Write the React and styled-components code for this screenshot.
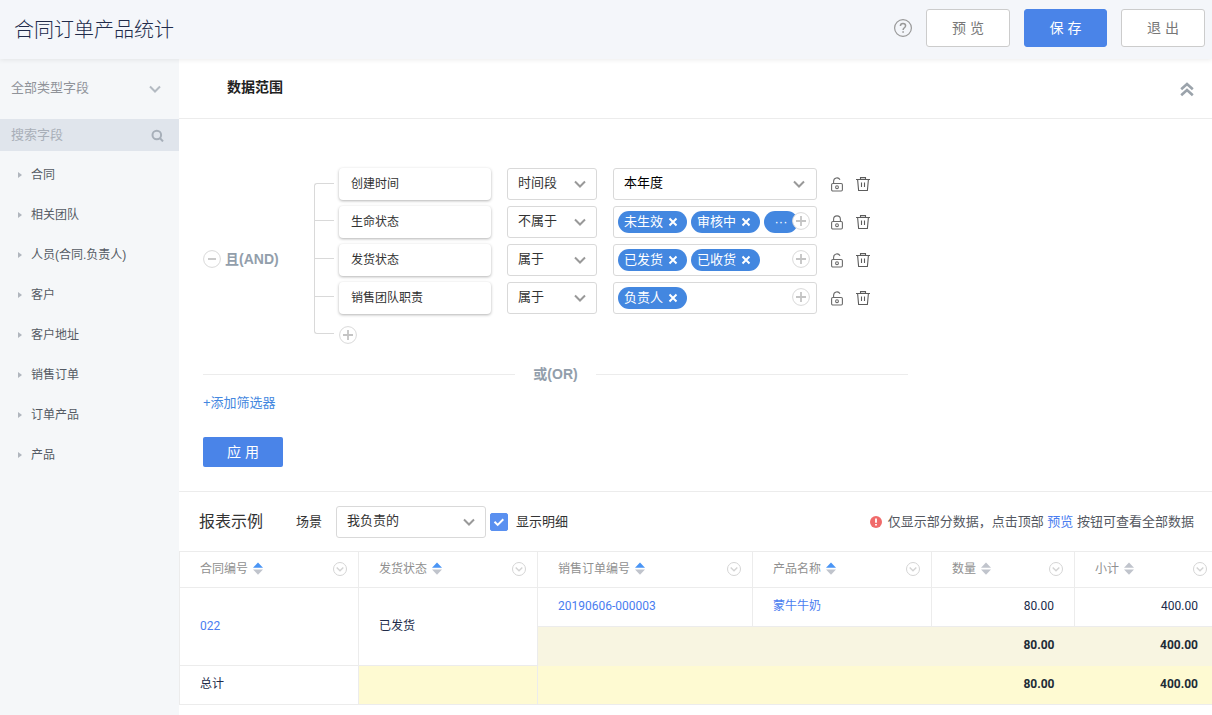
import { useState } from "react";
import styled, { createGlobalStyle, css } from "styled-components";

const fields = [
  "合同",
  "相关团队",
  "人员(合同.负责人)",
  "客户",
  "客户地址",
  "销售订单",
  "订单产品",
  "产品",
];

const filters = [
  { id: 1, name: "创建时间", operator: "时间段", range: "本年度", locked: false },
  { id: 2, name: "生命状态", operator: "不属于", tags: ["未生效", "审核中"], more: true, locked: true },
  { id: 3, name: "发货状态", operator: "属于", tags: ["已发货", "已收货"], locked: false },
  { id: 4, name: "销售团队职责", operator: "属于", tags: ["负责人"], locked: false },
];

const columns = [
  { id: 1, title: "合同编号", width: "179px", sorted: true },
  { id: 2, title: "发货状态", width: "179px", sorted: true },
  { id: 3, title: "销售订单编号", width: "215px", sorted: true },
  { id: 4, title: "产品名称", width: "179px", sorted: true },
  { id: 5, title: "数量", width: "143px", sorted: false },
  { id: 6, title: "小计", width: "auto", sorted: false },
];

// Icons
const ChevronIcon = ({ color = "#999" }) => (
  <svg width="14" height="14" viewBox="0 0 14 14" fill="none" stroke={color} strokeWidth="2" aria-hidden="true">
    <path d="M2 4.5 7 9.5 12 4.5" />
  </svg>
);

const DoubleUpIcon = () => (
  <svg width="14" height="16" viewBox="0 0 14 16" fill="none" stroke="#9ba3ab" strokeWidth="2.6" aria-hidden="true">
    <path d="M1.2 8.2 7 3 12.8 8.2M1.2 14.2 7 9 12.8 14.2" />
  </svg>
);

const SearchIcon = () => (
  <svg width="13" height="13" viewBox="0 0 13 13" fill="none" stroke="#a7afb9" strokeWidth="2" aria-hidden="true">
    <circle cx="5.8" cy="6" r="4.3" />
    <path d="M9 9.2 12 12.4" />
  </svg>
);

const HelpIcon = () => (
  <svg width="18" height="18" viewBox="1 1 18 18" fill="none" stroke="#999" strokeWidth="1.2" aria-hidden="true">
    <circle cx="10" cy="10" r="8.4" />
    <path d="M7.4 8c0-1.6 1.1-2.6 2.6-2.6s2.6 1 2.6 2.4c0 1.9-2.5 2-2.5 4.1" strokeWidth="1.5" />
    <path d="M10.1 13.2v1.6" strokeWidth="1.6" />
  </svg>
);

const CircleIcon = ({ plus }) => (
  <svg width="18" height="18" viewBox="0 0 18 18" fill="#fff" stroke="#d9d9d9" aria-hidden="true">
    <circle cx="9" cy="9" r="8.4" />
    <path d={plus ? "M4 9h10M9 4v10" : "M5 9h8"} stroke="#c4c4c4" strokeWidth="1.8" />
  </svg>
);

const LockIcon = ({ locked }) => (
  <svg width="12" height="15" viewBox="0 0 12 15" fill="none" stroke="#6b6b6b" strokeWidth="1.1" aria-hidden="true">
    <rect x=".6" y="6.5" width="10.8" height="7.5" rx="1.2" />
    <path d={locked ? "M2.6 6.500V4.300a3.4 3.4 0 0 1 6.8 0v2.200" : "M2.6 6.500V4.300A3.4 3.4 0 0 1 9 2.700"} />
    <circle cx="6" cy="10.2" r="1.4" />
  </svg>
);

const TrashIcon = () => (
  <svg width="14" height="15" viewBox="0 0 14 15" fill="none" stroke="#5c5c5c" strokeWidth="1.1" aria-hidden="true">
    <path d="M0 2.500h14M4.500 2.500V.6h5v1.900M1.600 2.500l1 11h8.800l1-11M5.500 5.500V10M8.500 5.500V10" />
  </svg>
);

const CloseIcon = () => (
  <svg width="10" height="10" viewBox="0 0 10 10" fill="none" stroke="#fff" strokeWidth="2" aria-hidden="true">
    <path d="M1.5 1.5l7 7M8.5 1.5l-7 7" />
  </svg>
);

const SortIcon = ({ active }) => (
  <svg width="10" height="13" viewBox="0 0 10 13" aria-hidden="true">
    <path d="M5 .5 10 5.8H0z" fill={active ? "#4a95f5" : "#c0c4cc"} />
    <path d="M5 12.7 10 7.5H0z" fill="#c0c4cc" />
  </svg>
);

const MenuIcon = () => (
  <svg width="14" height="14" viewBox="0 0 14 14" fill="none" stroke="#d4d4d4" aria-hidden="true">
    <circle cx="7" cy="7" r="6.5" />
    <path d="M3.7 5.5 7 8.8 10.3 5.5" strokeWidth="1.4" />
  </svg>
);

const WarningIcon = () => (
  <svg width="12" height="12" viewBox="0 0 12 12" aria-hidden="true">
    <circle cx="6" cy="6" r="6" fill="#f06a6a" />
    <path d="M6 2.5v4.2M6 7.9v1.7" stroke="#fff" strokeWidth="1.8" />
  </svg>
);

const App = () => {
  const [detail, setDetail] = useState(true);

  return (
    <>
      <GlobalStyle />
      <Header>
        <PageTitle>合同订单产品统计</PageTitle>
        <IconButton aria-label="帮助"><HelpIcon /></IconButton>
        <HeaderButton>预 览</HeaderButton>
        <HeaderButton $primary>保 存</HeaderButton>
        <HeaderButton>退 出</HeaderButton>
      </Header>

      <Layout>
        <Sidebar>
          <TypeField>
            <TypeSelect aria-label="字段类型">
              <option>全部类型字段</option>
            </TypeSelect>
            <SelectArrow $right="17px"><ChevronIcon color="#b3bac2" /></SelectArrow>
          </TypeField>
          <SearchBar>
            <SearchInput placeholder="搜索字段" aria-label="搜索字段" />
            <SearchIcon />
          </SearchBar>
          <FieldList>
            {fields.map((field) => (
              <li key={field}>
                <FieldButton><Caret />{field}</FieldButton>
              </li>
            ))}
          </FieldList>
        </Sidebar>

        <Main>
          <ScopeHeader>
            <ScopeTitle>数据范围</ScopeTitle>
            <IconButton aria-label="收起"><DoubleUpIcon /></IconButton>
          </ScopeHeader>

          <Scope>
            <Group>
              <GroupLabel>
                <IconButton aria-label="删除条件组"><CircleIcon /></IconButton>
                <Logic>且(AND)</Logic>
              </GroupLabel>
              <Rules>
                {filters.map((filter) => (
                  <Rule key={filter.id}>
                    <Branch />
                    <RuleName>{filter.name}</RuleName>
                    <SelectBox $width="90px">
                      <Select aria-label={filter.name + "条件"}>
                        <option>{filter.operator}</option>
                      </Select>
                      <SelectArrow $right="10px"><ChevronIcon /></SelectArrow>
                    </SelectBox>
                    <RuleValue>
                      {filter.range ? (
                        <SelectBox $width="204px">
                          <Select aria-label={filter.name} $dark>
                            <option>{filter.range}</option>
                          </Select>
                          <SelectArrow $right="11px"><ChevronIcon /></SelectArrow>
                        </SelectBox>
                      ) : (
                        <TagBox>
                          {filter.tags.map((tag) => (
                            <Tag key={tag}>
                              {tag}
                              <IconButton aria-label={"移除" + tag}><CloseIcon /></IconButton>
                            </Tag>
                          ))}
                          {filter.more && <MoreTag>···</MoreTag>}
                          <AddTag aria-label="添加"><CircleIcon plus /></AddTag>
                        </TagBox>
                      )}
                    </RuleValue>
                    <RuleActions>
                      <IconButton aria-label="锁定"><LockIcon locked={filter.locked} /></IconButton>
                      <IconButton aria-label="删除"><TrashIcon /></IconButton>
                    </RuleActions>
                  </Rule>
                ))}
                <AddRule>
                  <Branch />
                  <IconButton aria-label="添加条件"><CircleIcon plus /></IconButton>
                </AddRule>
              </Rules>
            </Group>

            <Divider><Logic>或(OR)</Logic></Divider>
            <AddFilter href="#">+添加筛选器</AddFilter>
            <ApplyButton>应 用</ApplyButton>
          </Scope>

          <ReportBar>
            <ReportTitle>报表示例</ReportTitle>
            <SceneLabel htmlFor="scene">场景</SceneLabel>
            <SelectBox $width="150px">
              <Select id="scene">
                <option>我负责的</option>
              </Select>
              <SelectArrow $right="10px"><ChevronIcon /></SelectArrow>
            </SelectBox>
            <CheckLabel>
              <Checkbox type="checkbox" checked={detail} onChange={(e) => setDetail(e.target.checked)} />
              <CheckMark viewBox="0 0 18 18" aria-hidden="true"><path d="M4.5 8.8 7.7 11.9 13.3 6.3" /></CheckMark>
              显示明细
            </CheckLabel>
            <Notice>
              <WarningIcon />
              <span>仅显示部分数据，点击顶部 <Link href="#">预览</Link> 按钮可查看全部数据</span>
            </Notice>
          </ReportBar>

          <Table>
            <colgroup>
              {columns.map((col) => (
                <col key={col.id} style={{ width: col.width }} />
              ))}
            </colgroup>
            <thead>
              <tr>
                {columns.map((col) => (
                  <HeadCell key={col.id}>
                    <HeadContent>
                      {col.title}
                      <IconButton aria-label="排序"><SortIcon active={col.sorted} /></IconButton>
                      <ColumnMenu aria-label="列菜单"><MenuIcon /></ColumnMenu>
                    </HeadContent>
                  </HeadCell>
                ))}
              </tr>
            </thead>
            <tbody>
              <tr>
                <Cell rowSpan={2}><Link href="#">022</Link></Cell>
                <Cell rowSpan={2}>已发货</Cell>
                <Cell><Link href="#">20190606-000003</Link></Cell>
                <Cell><Link href="#">蒙牛牛奶</Link></Cell>
                <Cell $number>80.00</Cell>
                <Cell $number>400.00</Cell>
              </tr>
              <tr>
                <SumCell colSpan={2} />
                <SumCell $number>80.00</SumCell>
                <SumCell $number>400.00</SumCell>
              </tr>
              <tr>
                <Cell>总计</Cell>
                <TotalCell $bordered />
                <TotalCell colSpan={2} />
                <TotalCell $number>80.00</TotalCell>
                <TotalCell $number>400.00</TotalCell>
              </tr>
            </tbody>
          </Table>
        </Main>
      </Layout>
    </>
  );
};

const GlobalStyle = createGlobalStyle`
  * {
    box-sizing: border-box;
  }

  body {
    margin: 0;
    background: #fff;
    color: #333;
    font-family: "Liberation Sans", "Noto Sans CJK SC", sans-serif;
    font-size: 13px;
    line-height: 20px;
  }

  button, input, select {
    font: inherit;
    color: inherit;
  }

  button {
    padding: 0;
    border: none;
    background: none;
    cursor: pointer;
  }

  svg {
    display: block;
    flex: none;
  }
`;

const Header = styled.header`
  position: relative;
  display: flex;
  align-items: center;
  height: 59px;
  padding: 0 7px 3px 14px;
  background: #f4f6fa;
  box-shadow: 0 1px 5px rgba(0, 0, 0, 0.08);
`;

const PageTitle = styled.h1`
  flex: 1;
  margin: 0;
  padding-top: 4px;
  color: #212b4a;
  font-size: 20px;
  font-weight: 300;
`;

const IconButton = styled.button`
  display: flex;
  align-items: center;
  justify-content: center;
`;

const primary = css`
  border-color: #4a84e8;
  background: #4a84e8;
  color: #fff;
`;

const HeaderButton = styled.button`
  width: ${({ $primary }) => ($primary ? "83px" : "84px")};
  height: 38px;
  margin-left: 14px;
  border: 1px solid #ccc;
  border-radius: 3px;
  background: #fff;
  color: #777;
  font-size: 14px;
  ${({ $primary }) => $primary && primary}
`;

const Layout = styled.div`
  display: flex;
  min-height: calc(100vh - 59px);
`;

const Sidebar = styled.aside`
  flex: none;
  width: 179px;
  background: #f5f7f9;
`;

const TypeField = styled.div`
  position: relative;
  height: 60px;
`;

const TypeSelect = styled.select`
  width: 100%;
  height: 58px;
  padding: 0 11px;
  border: none;
  appearance: none;
  background: none;
  color: #909399;
`;

const SelectArrow = styled.span`
  position: absolute;
  top: 0;
  right: ${({ $right }) => $right};
  display: flex;
  align-items: center;
  height: 100%;
  pointer-events: none;
`;

const SearchBar = styled.div`
  display: flex;
  align-items: center;
  height: 32px;
  padding: 0 15px 0 11px;
  background: #e0e5ec;
`;

const SearchInput = styled.input`
  flex: 1;
  min-width: 0;
  padding: 0;
  border: none;
  outline: none;
  background: none;

  &::placeholder {
    color: #a9afb8;
  }
`;

const FieldList = styled.ul`
  margin: 0;
  padding: 4px 0;
  list-style: none;
`;

const FieldButton = styled.button`
  display: flex;
  align-items: center;
  gap: 9px;
  width: 100%;
  height: 40px;
  padding: 0 18px;
  color: #545a63;
  font-size: 12px;
`;

const Caret = styled.span`
  border: 3px solid transparent;
  border-left: 4px solid #b0b6be;
  border-right: 0;
`;

const Main = styled.main`
  flex: 1;
  min-width: 0;
`;

const ScopeHeader = styled.div`
  display: flex;
  align-items: center;
  justify-content: space-between;
  height: 60px;
  padding: 0 18px 0 48px;
  border-bottom: 1px solid #ececec;
`;

const ScopeTitle = styled.h2`
  margin: 0;
  padding-bottom: 3px;
  color: #222;
  font-size: 14px;
`;

const Scope = styled.section`
  padding: 49px 24px 24px;
  border-bottom: 1px solid #ececec;
`;

const Group = styled.div`
  display: flex;
  align-items: center;
`;

const GroupLabel = styled.div`
  display: flex;
  align-items: center;
  gap: 4px;
  width: 111px;
`;

const Logic = styled.strong`
  color: #929eab;
  font-size: 14px;
`;

const Rules = styled.div`
  flex: 1;
`;

const Branch = styled.span`
  flex: none;
  align-self: stretch;
  width: 20px;
  margin-right: 5px;
  border-left: 1px solid #d9d9d9;
  background: linear-gradient(#d9d9d9, #d9d9d9) 0 14px / 100% 1px no-repeat;
`;

const Rule = styled.div`
  display: flex;
  align-items: flex-start;
  height: 38px;

  /* the line starts at the middle of the first rule */
  &:first-child ${Branch} {
    margin-top: 15px;
    border-top: 1px solid #d9d9d9;
    border-top-left-radius: 3px;
    background: none;
  }
`;

const AddRule = styled.div`
  display: flex;
  align-items: center;
  height: 30px;

  ${Branch} {
    height: 14px;
    align-self: flex-start;
    border-bottom: 1px solid #d9d9d9;
    border-bottom-left-radius: 3px;
    background: none;
  }
`;

const RuleName = styled.div`
  width: 152px;
  height: 32px;
  margin-right: 16px;
  padding: 6px 12px;
  border-radius: 4px;
  background: #fff;
  box-shadow: 0 1px 3px rgba(0, 0, 0, 0.3);
  font-size: 12px;
`;

const RuleValue = styled.div`
  margin: 0 14px 0 16px;
`;

const SelectBox = styled.div`
  position: relative;
  flex: none;
  width: ${({ $width }) => $width};
`;

const Select = styled.select`
  display: block;
  width: 100%;
  height: 32px;
  padding: 0 10px 2px;
  border: 1px solid #d9d9d9;
  border-radius: 3px;
  appearance: none;
  background: #fff;
  color: ${({ $dark }) => ($dark ? "#000" : "#333")};
`;

const TagBox = styled.div`
  position: relative;
  display: flex;
  align-items: center;
  gap: 4px;
  width: 204px;
  height: 32px;
  padding: 0 4px;
  border: 1px solid #d9d9d9;
  border-radius: 3px;
`;

const Tag = styled.span`
  display: flex;
  align-items: center;
  gap: 5px;
  height: 22px;
  padding: 0 9px 0 6px;
  border-radius: 11px;
  background: #4387e0;
  color: #fff;
`;

const MoreTag = styled.span`
  width: 34px;
  height: 22px;
  border-radius: 11px;
  background: #4387e0;
  color: #fff;
  line-height: 22px;
  text-align: center;
`;

const AddTag = styled(IconButton)`
  position: absolute;
  top: 5px;
  right: 6px;
`;

const RuleActions = styled.div`
  display: flex;
  align-items: center;
  gap: 13px;
  height: 32px;
`;

const Divider = styled.div`
  display: flex;
  align-items: center;
  gap: 18px;
  max-width: 705px;
  margin: 14px 0 9px;

  &::before, &::after {
    content: "";
    flex: 1;
    height: 1px;
    background: #ececec;
  }
`;

const Link = styled.a`
  color: #4a7df0;
  text-decoration: none;
`;

const AddFilter = styled(Link)`
  display: block;
  width: fit-content;
  color: #4387e0;
`;

const ApplyButton = styled.button`
  width: 80px;
  height: 30px;
  margin-top: 24px;
  border-radius: 2px;
  ${primary}
  font-size: 14px;
`;

const ReportBar = styled.div`
  display: flex;
  align-items: center;
  height: 59px;
  padding: 0 18px 0 20px;
`;

const ReportTitle = styled.h2`
  margin: 0 33px 0 0;
  font-size: 16px;
  font-weight: 400;
`;

const SceneLabel = styled.label`
  margin-right: 14px;
`;

const CheckLabel = styled.label`
  position: relative;
  display: flex;
  align-items: center;
  gap: 8px;
  margin-left: 4px;
`;

const Checkbox = styled.input`
  width: 18px;
  height: 18px;
  margin: 0;
  border: 1px solid #5a90f0;
  border-radius: 2px;
  appearance: none;
  background: #fff;

  &:checked {
    background: #5a90f0;
  }
`;

const CheckMark = styled.svg`
  position: absolute;
  left: 0;
  width: 18px;
  height: 18px;
  fill: none;
  stroke: #fff;
  stroke-width: 2;
  pointer-events: none;
`;

const Notice = styled.p`
  display: flex;
  align-items: center;
  gap: 6px;
  margin: 0 0 0 auto;
  color: #545861;
`;

const Table = styled.table`
  width: 100%;
  table-layout: fixed;
  border-collapse: collapse;
  color: #212b4a;
  font-family: Roboto, "Noto Sans CJK SC", sans-serif;
  font-size: 12px;
`;

const HeadCell = styled.th`
  height: 36px;
  padding: 0 4px 2px 20px;
  border: 1px solid #ececec;
  border-right: none;
  color: #909090;
  font-weight: 400;
`;

const HeadContent = styled.div`
  display: flex;
  align-items: center;
  gap: 5px;
`;

const ColumnMenu = styled(IconButton)`
  margin-left: auto;
  margin-right: 7px;

  ${HeadCell}:last-child & {
    margin-right: 1px;
  }
`;

const Cell = styled.td`
  height: 39px;
  padding: 0 14px 2px 20px;
  border: 1px solid #ececec;
  border-right: none;
  text-align: ${({ $number }) => ($number ? "right" : "left")};

  &:nth-last-child(2) {
    padding-right: 20px;
  }
`;

const SumCell = styled(Cell)`
  border-width: 1px 0 0;
  background: #f8f5e1;
  color: #212b36;
  font-weight: 700;

  &:first-child {
    border-left-width: 1px;
  }
`;

const TotalCell = styled(Cell)`
  border-width: 0 0 1px;
  background: #fefad2;
  color: #212b36;
  font-weight: 700;
  ${({ $bordered }) => $bordered && "border: 1px solid #ececec;"}
`;

export default App;
